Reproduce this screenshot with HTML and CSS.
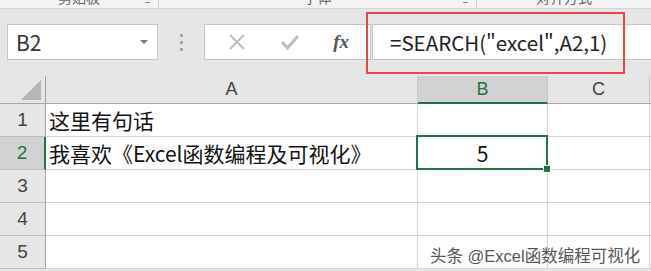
FILE: index.html
```html
<!DOCTYPE html>
<html lang="zh-CN">
<head>
    <meta charset="UTF-8">
    <meta name="viewport" content="width=device-width, initial-scale=1.0">
    <title>SEARCH</title>
    <link rel="stylesheet" href="styles.css">
</head>
<body>
    <div class="ribbon">
        <div class="group g1"><span class="glabel">剪贴板</span><span class="launch"></span></div>
        <div class="group g2"><span class="glabel">字体</span><span class="launch"></span></div>
        <div class="group g3"><span class="glabel">对齐方式</span></div>
    </div>

    <div class="fbar">
        <div class="namebox">
            <span>B2</span>
            <span class="caret"></span>
        </div>
        <div class="grip"><i></i><i></i><i></i></div>
        <div class="btns">
            <svg class="ico" width="18" height="18" viewBox="0 0 18 18">
                <path d="M2 2 L16 16 M16 2 L2 16" stroke="#bdbdbd" stroke-width="2" fill="none"/>
            </svg>
            <svg class="ico" width="20" height="18" viewBox="0 0 20 18">
                <path d="M2 9 L7.5 15 L18 3" stroke="#bdbdbd" stroke-width="3" fill="none"/>
            </svg>
            <span class="fx">fx</span>
        </div>
        <div class="formula">=SEARCH("excel",A2,1)</div>
    </div>
    <div class="mark"></div>

    <div class="sheet">
        <div class="corner"><span class="tri"></span></div>
        <div class="colhead">A</div>
        <div class="colhead active">B</div>
        <div class="colhead">C</div>
        <div class="colhead"></div>

        <div class="rowhead">1</div>
        <div class="cell">这里有句话</div>
        <div class="cell"></div>
        <div class="cell"></div>
        <div class="cell"></div>

        <div class="rowhead active">2</div>
        <div class="cell">我喜欢《Excel函数编程及可视化》</div>
        <div class="cell num selected">5</div>
        <div class="cell"></div>
        <div class="cell"></div>

        <div class="rowhead">3</div>
        <div class="cell"></div>
        <div class="cell"></div>
        <div class="cell"></div>
        <div class="cell"></div>

        <div class="rowhead">4</div>
        <div class="cell"></div>
        <div class="cell"></div>
        <div class="cell"></div>
        <div class="cell"></div>

        <div class="rowhead">5</div>
        <div class="cell"></div>
        <div class="cell"></div>
        <div class="cell"></div>
        <div class="cell"></div>
    </div>

    <div class="watermark">头条 @Excel函数编程可视化</div>
</body>
</html>
```

FILE: styles.css
```css
body {
    margin: 0;
    width: 651px;
    height: 271px;
    overflow: hidden;
    position: relative;
    background-color: #e6e6e6;
    font-family: "Noto Sans CJK SC", "Liberation Sans", sans-serif;
    color: #222222;
}
.ribbon {
    display: flex;
    height: 8px;
    background-color: #f3f3f3;
    border-bottom: 1px solid #d5d5d5;
    overflow: hidden;
}
.group {
    position: relative;
    display: flex;
    justify-content: center;
    border-right: 1px solid #d0d0d0;
    box-sizing: border-box;
}
.g1 { width: 159px; }
.g2 { width: 318px; }
.g3 { flex: 1; border-right: none; }
.glabel {
    font-size: 14px;
    line-height: 16px;
    margin-top: -11px;
    color: #666666;
}
.launch {
    position: absolute;
    right: 8px;
    top: 2px;
    width: 5px;
    height: 1px;
    background-color: #888888;
}
.fbar {
    display: flex;
    align-items: flex-start;
    height: 67px;
    padding: 15px 0 0 7px;
    box-sizing: border-box;
}
.namebox {
    display: flex;
    align-items: center;
    justify-content: space-between;
    width: 151px;
    height: 36px;
    padding: 0 9px 0 8px;
    box-sizing: border-box;
    background-color: #ffffff;
    border: 1px solid #c6c6c6;
    font-size: 21px;
    color: #333333;
}
.caret {
    width: 0;
    height: 0;
    border-left: 4px solid transparent;
    border-right: 4px solid transparent;
    border-top: 4px solid #7a7a7a;
}
.grip {
    display: flex;
    flex-direction: column;
    align-items: center;
    gap: 4px;
    width: 46px;
    padding-top: 10px;
}
.grip i {
    width: 3px;
    height: 3px;
    background-color: #a8a8a8;
}
.btns {
    display: flex;
    align-items: center;
    justify-content: space-around;
    width: 167px;
    height: 36px;
    padding: 0 4px 0 6px;
    box-sizing: border-box;
    background-color: #ffffff;
    border: 1px solid #c6c6c6;
}
.fx {
    font-family: "Liberation Serif", serif;
    font-style: italic;
    font-weight: bold;
    font-size: 19px;
    color: #555555;
}
.formula {
    flex: 1;
    height: 36px;
    margin-left: 1px;
    padding-left: 17px;
    box-sizing: border-box;
    background-color: #ffffff;
    border: 1px solid #c6c6c6;
    border-right: none;
    font-size: 20.5px;
    line-height: 34px;
    color: #222222;
}
.mark {
    position: absolute;
    left: 366px;
    top: 12px;
    width: 259px;
    height: 62px;
    box-sizing: border-box;
    border: 2px solid #e5484a;
}
.sheet {
    display: grid;
    grid-template-columns: 46px 372px 130px 102px 1fr;
    grid-template-rows: 28px repeat(5, 33px);
    background-color: #ffffff;
}
.corner, .colhead, .rowhead {
    background-color: #e6e6e6;
    color: #444444;
    box-sizing: border-box;
    display: flex;
    align-items: center;
    justify-content: center;
    font-family: "Liberation Sans", sans-serif;
    font-size: 18px;
}
.corner {
    position: relative;
    border-right: 1px solid #a6a6a6;
    border-bottom: 1px solid #a6a6a6;
}
.tri {
    position: absolute;
    right: 4px;
    bottom: 3px;
    width: 0;
    height: 0;
    border-left: 20px solid transparent;
    border-bottom: 20px solid #b5b5b5;
}
.colhead {
    border-right: 1px solid #c8c8c8;
    border-bottom: 1px solid #a6a6a6;
}
.colhead.active {
    background-color: #d2d2d2;
    color: #217346;
    border-bottom: 2px solid #217346;
}
.rowhead {
    border-right: 1px solid #a6a6a6;
    border-bottom: 1px solid #bdbdbd;
    font-size: 19px;
}
.rowhead.active {
    background-color: #d2d2d2;
    color: #217346;
    border-right: 2px solid #217346;
}
.cell {
    display: flex;
    align-items: center;
    padding-left: 3px;
    box-sizing: border-box;
    border-right: 1px solid #d4d4d4;
    border-bottom: 1px solid #d4d4d4;
    font-size: 21px;
    color: #111111;
    white-space: nowrap;
}
.cell.num {
    justify-content: center;
    padding-left: 0;
}
.selected {
    position: relative;
}
.selected::after {
    content: "";
    position: absolute;
    left: -2px;
    top: -2px;
    right: -1px;
    bottom: -1px;
    border: 2px solid #217346;
}
.selected::before {
    content: "";
    position: absolute;
    right: -4px;
    bottom: -4px;
    width: 6px;
    height: 6px;
    background-color: #217346;
    border: 1px solid #ffffff;
    z-index: 1;
}
.watermark {
    position: absolute;
    left: 430px;
    top: 243px;
    font-family: "Liberation Sans", "Noto Sans CJK SC", sans-serif;
    font-size: 16.5px;
    color: #555555;
    text-shadow: 0 0 2px #ffffff, 0 0 2px #ffffff;
}
```
